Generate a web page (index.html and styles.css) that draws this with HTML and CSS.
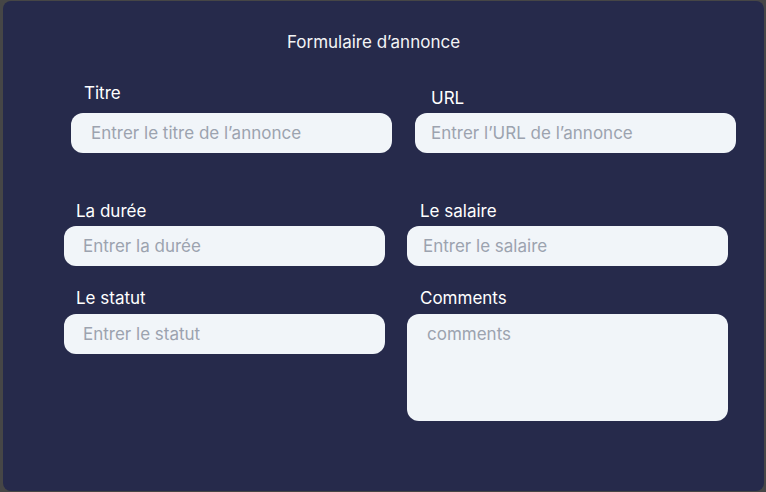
FILE: index.html
```html
<!DOCTYPE html>
<html lang="fr">
<head>
<meta charset="utf-8">
<title>Formulaire d’annonce</title>
<link rel="stylesheet" href="styles.css">
</head>
<body>
<main class="panel">
  <h1 class="title">Formulaire d’annonce</h1>
  <form class="form">
    <div class="row row-first">
      <div class="field">
        <label class="label label-titre" for="titre">Titre</label>
        <input class="input" id="titre" type="text" placeholder="Entrer le titre de l’annonce">
      </div>
      <div class="field">
        <label class="label label-url" for="url">URL</label>
        <input class="input input-url" id="url" type="text" placeholder="Entrer l’URL de l’annonce">
      </div>
    </div>
    <div class="row row-second">
      <div class="field">
        <label class="label" for="duree">La durée</label>
        <input class="input" id="duree" type="text" placeholder="Entrer la durée">
      </div>
      <div class="field">
        <label class="label label-right" for="salaire">Le salaire</label>
        <input class="input input-url" id="salaire" type="text" placeholder="Entrer le salaire">
      </div>
    </div>
    <div class="row row-third">
      <div class="field">
        <label class="label label-third" for="statut">Le statut</label>
        <input class="input" id="statut" type="text" placeholder="Entrer le statut">
      </div>
      <div class="field">
        <label class="label label-right label-third" for="comments">Comments</label>
        <textarea class="input textarea" id="comments" placeholder="comments"></textarea>
      </div>
    </div>
  </form>
</main>
</body>
</html>
```
FILE: styles.css
```css
* { box-sizing: border-box; }
html, body { margin: 0; padding: 0; }
body {
  background: #464646;
  width: 766px;
  height: 492px;
  overflow: hidden;
  font-family: Inter, "Noto Sans", sans-serif;
}
.panel {
  margin: 1px 2px 0 3px;
  width: 761px;
  height: 490px;
  background: #262a4b;
  border-radius: 8px;
  padding: 31px 0 0 61px;
  display: flex;
  flex-direction: column;
}
.title {
  margin: 0 0 31px -61px;
  padding-right: 20px;
  font-size: 17px;
  line-height: 20px;
  font-weight: 400;
  color: #f3f4f6;
  text-align: center;
}
.form { display: flex; flex-direction: column; }
.row { display: flex; gap: 22px; align-items: flex-start; }
.row-first { padding-left: 7px; gap: 23px; }
.row-second { margin-top: 48px; }
.row-third { margin-top: 22px; }
.field { display: flex; flex-direction: column; width: 321px; }
.label {
  color: #ffffff;
  font-size: 17px;
  line-height: 20px;
  margin: 0 0 5px 12px;
}
.label-titre { margin: 0 0 10px 13px; }
.label-url { margin: 5px 0 5px 16px; }
.label-right { margin-left: 13px; }
.label-third { margin-bottom: 6px; }
.input {
  width: 321px;
  height: 40px;
  border: none;
  outline: none;
  background: #f1f5f9;
  border-radius: 12px;
  padding: 0 19px;
  font-family: Inter, "Noto Sans", sans-serif;
  font-size: 17px;
  color: #1f2937;
}
.row-first .input { padding-left: 20px; }
.row-first .input-url { padding-left: 16px; }
.input-url { padding-left: 16px; }
.input::placeholder { color: #9ca3af; }
.textarea {
  height: 107px;
  resize: none;
  padding: 10px 20px;
  line-height: 20px;
  display: block;
}
```
